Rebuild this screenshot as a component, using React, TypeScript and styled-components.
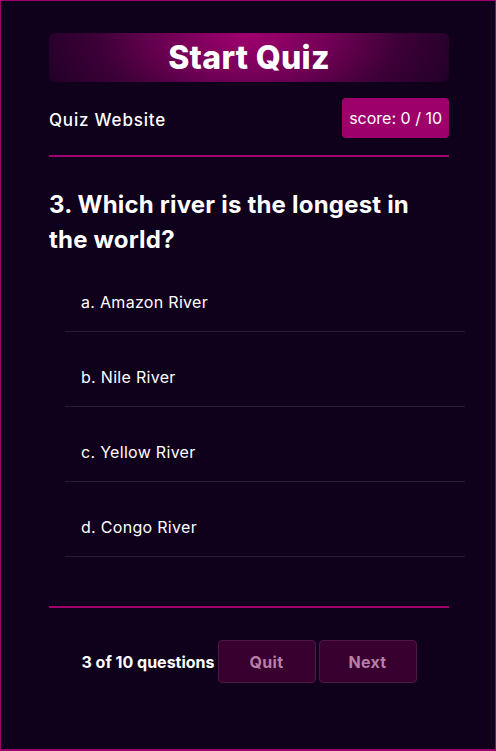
import styled, { createGlobalStyle } from "styled-components";

const GlobalStyle = createGlobalStyle`
  * { box-sizing: border-box; }
  html, body { margin: 0; padding: 0; background: #0f001c; }
  body {
    font-family: Inter, "Noto Sans", sans-serif;
    color: #ffffff;
  }
`;

const Page = styled.div`
  width: 496px;
  height: 751px;
  border: 1px solid #a0006c;
  border-bottom-width: 2px;
  background: #0f001c;
  padding: 32px 48px;
`;

const Container = styled.div`
  width: 400px;
  display: flex;
  flex-direction: column;
`;

const Banner = styled.h1`
  margin: 0;
  height: 49px;
  border-radius: 6px;
  background: radial-gradient(ellipse 230px 130px at 50% 0%, #a1006f 0%, #720056 35%, #3e0038 65%, #1c0024 100%);
  font-size: 32px;
  font-weight: 800;
  line-height: 49px;
  text-align: center;
  letter-spacing: 0.3px;
`;

const TopRow = styled.div`
  display: flex;
  justify-content: space-between;
  align-items: center;
  margin-top: 16px;
  height: 40px;
`;

const SiteName = styled.span`
  font-size: 17px;
  font-weight: 500;
  letter-spacing: 0.8px;
  padding-top: 3px;
`;

const Score = styled.span`
  background: #9e006b;
  border-radius: 4px;
  height: 40px;
  padding: 0 7px;
  display: flex;
  align-items: center;
  font-size: 16px;
`;

const Rule = styled.div<{ $gap: number }>`
  height: 2px;
  margin-top: ${(p) => p.$gap}px;
  background: #a0006c;
`;

const Question = styled.h2`
  margin: 30px 0 0;
  font-size: 24px;
  line-height: 35px;
  font-weight: 700;
  letter-spacing: 0.2px;
`;

const Options = styled.ul`
  list-style: none;
  margin: 0;
  padding: 0 0 0 16px;
  width: 416px;
`;

const Option = styled.li`
  margin-top: 16px;
  padding: 17px 16px;
  line-height: 24px;
  font-size: 16px;
  border-bottom: 1px solid #2a1c38;
  letter-spacing: 0.3px;
  cursor: pointer;
`;

const Footer = styled.div`
  margin-top: 32px;
  display: flex;
  justify-content: center;
  align-items: center;
  gap: 3px;
`;

const Progress = styled.span`
  font-size: 16px;
  font-weight: 700;
`;

const Button = styled.button`
  width: 98px;
  height: 43px;
  border-radius: 4px;
  border: 1px solid #4c1746;
  background: #38002f;
  color: #b77ea8;
  font-family: inherit;
  font-size: 16px;
  font-weight: 700;
  letter-spacing: 0.3px;
`;

const options = ["a. Amazon River", "b. Nile River", "c. Yellow River", "d. Congo River"];

export default function App() {
  return (
    <>
      <GlobalStyle />
      <Page>
        <Container>
          <Banner>Start Quiz</Banner>
          <TopRow>
            <SiteName>Quiz Website</SiteName>
            <Score>score: 0 / 10</Score>
          </TopRow>
          <Rule $gap={17} />
          <Question>3. Which river is the longest in the world?</Question>
          <Options>
            {options.map((o) => (
              <Option key={o}>{o}</Option>
            ))}
          </Options>
          <Rule $gap={49} />
          <Footer>
            <Progress>3 of 10 questions</Progress>
            <Button>Quit</Button>
            <Button>Next</Button>
          </Footer>
        </Container>
      </Page>
    </>
  );
}
